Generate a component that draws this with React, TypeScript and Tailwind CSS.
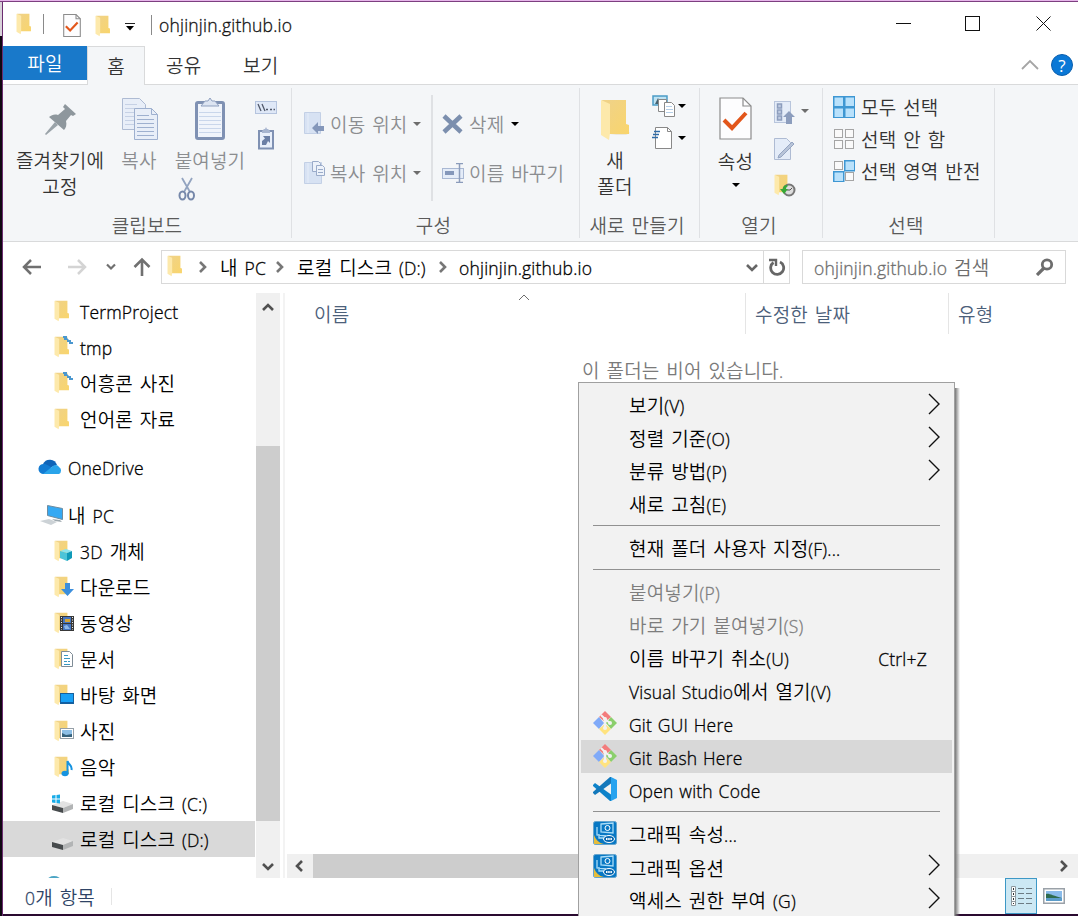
import React from "react";

type Kids = { children?: React.ReactNode };

function Svg({ w, h, className = "", children }: Kids & { w: number; h: number; className?: string }) {
  return (
    <svg width={w} height={h} viewBox={`0 0 ${w} ${h}`} fill="none" className={`shrink-0 ${className}`}>
      {children}
    </svg>
  );
}

/* Mixed Korean / Latin text: each script gets its own face and size. */
function T({ children, className = "" }: { children: string; className?: string }) {
  const runs = children.match(/[\x21-\x7e]+(?: +[\x21-\x7e]+)*|[^\x21-\x7e]+/g) ?? [];
  return (
    <span className={`whitespace-pre ${className}`}>
      {runs.map((r, i) =>
        /[\x21-\x7e]/.test(r) ? (
          <span key={i} className="font-['Open_Sans','Noto_Sans',sans-serif] text-[17.5px] font-light tracking-[0.2px] [-webkit-text-stroke:0.3px_currentColor] [word-spacing:1px]">{r}</span>
        ) : (
          <span key={i} className="text-[19px] font-[350] tracking-[0.15px] [word-spacing:2.5px]">{r}</span>
        )
      )}
    </span>
  );
}

function Caret({ color = "#000", className = "" }: { color?: string; className?: string }) {
  return (
    <Svg w={8} h={4} className={className}>
      <path d="M0 0h8L4 4z" fill={color} />
    </Svg>
  );
}

function Folder({ big = false, className = "" }: { big?: boolean; className?: string }) {
  return (
    <svg width={big ? 31 : 16} height={big ? 42 : 22} viewBox="0 0 31 42" className={`shrink-0 ${className}`}>
      <defs>
        <linearGradient id="fold" x1="0" y1="0" x2="1" y2="1">
          <stop offset="0" stopColor="#efd28a" />
          <stop offset="1" stopColor="#f9d56c" />
        </linearGradient>
      </defs>
      {big && <path d="M10 36h16l4-2-1-1z" fill="#ebe7dc" />}
      <path d="M2 1h24v24l3 1v9H9z" fill="url(#fold)" />
      <path d="M1 1l9 4v29l-1 7-8-5z" fill="#fde9ab" />
    </svg>
  );
}

function Doc({ check = false, big = false }: { check?: boolean; big?: boolean }) {
  return (
    <svg width={big ? 33 : 18} height={big ? 43 : 23} viewBox="0 0 33 43" fill="none" className="shrink-0">
      <path d="M1 1h23l8 8v33H1z" fill="#fdfdfe" stroke="#8c8c8c" strokeWidth={big ? 1.2 : 2} />
      <path d="M24 1v8h8" stroke="#8c8c8c" strokeWidth={big ? 1.2 : 2} />
      {check && <path d="M5 23l8 8 14-15" stroke="#e2561b" strokeWidth="4" />}
    </svg>
  );
}

function Group({ label, className, labelClass = "", children }: Kids & { label: string; className: string; labelClass?: string }) {
  return (
    <div className={`flex shrink-0 flex-col ${className}`}>
      <div className="flex h-[127px]">{children}</div>
      <div className={`flex h-[26px] items-center justify-center text-[#5a5a5a] ${labelClass}`}>
        <T>{label}</T>
      </div>
    </div>
  );
}

const Sep = () => <div className="my-[3px] w-px shrink-0 bg-[#dfe1e4]" />;

function Ribbon() {
  return (
    <div className="flex h-[157px] border-b border-[#d9dadb] bg-[#f4f6f8] text-[#333]">
      <Group label="클립보드" className="w-[288px]">
        <div className="ml-[12px] flex w-[90px] flex-col items-center text-center leading-[26px]">
          <div className="flex h-[62px] items-center pt-[6px]">
            <Svg w={31} h={31}>
              <path d="M20 0l11 10-3 2-2-1-5 6c1 4 0 7-2 9L4 13c3-2 5-3 9-2l7-6-2-2z" fill="#8e979d" />
              <path d="M10 18l3 3L1 31l-1-1z" fill="#9aa3a9" />
            </Svg>
          </div>
          <T>즐겨찾기에</T>
          <T>고정</T>
        </div>
        <div className="flex w-[68px] flex-col items-center leading-[26px] text-[#8b8d90]">
          <div className="flex h-[62px] items-center pt-[5px]">
            <Svg w={37} h={43}>
              <path d="M1.500 1.500h17l6 6v25h-23z" fill="#e8eef8" stroke="#aebbd3" />
              <path d="M4 7.500h12M4 11.500h16M4 15.500h9M4 19.500h9M4 23.500h9M4 27.500h9" stroke="#c6d1e5" />
              <path d="M13.500 11.500h17l6 6v25h-23z" fill="#e8eef8" stroke="#9eb0cf" />
              <path d="M30.500 11.500v6h6M16 18.500h12M16 22.500h17M16 26.500h17M16 30.500h17M16 34.500h17M16 38.500h17" stroke="#9eb0cf" />
            </Svg>
          </div>
          <T>복사</T>
        </div>
        <div className="flex w-[74px] flex-col items-center leading-[26px] text-[#8b8d90]">
          <div className="flex h-[62px] items-center pt-[5px]">
            <Svg w={32} h={44}>
              <rect x="2.5" y="5.500" width="27" height="36" rx="1.500" fill="#f0f4fb" stroke="#7f91b3" strokeWidth="3" />
              <path d="M5 15.500h22M5 19.500h22M5 23.500h22M5 27.500h22M5 31.500h22M5 35.500h22" stroke="#c9d6eb" />
              <path d="M7 9l4-5h3l2-3 2 3h3l4 5z" fill="#dce4f2" stroke="#8fa0c0" />
            </Svg>
          </div>
          <T>붙여넣기</T>
          <Svg w={18} h={24} className="mt-[4px] mr-[47px]">
            <path d="M4 1l8 14M14 1L6 15" stroke="#93a4c0" strokeWidth="1.800" />
            <ellipse cx="4.500" cy="18.500" rx="3" ry="4" stroke="#7688aa" strokeWidth="2" />
            <ellipse cx="13" cy="18.500" rx="3" ry="4" stroke="#7688aa" strokeWidth="2" />
          </Svg>
        </div>
        <div className="flex w-[38px] flex-col items-center pt-[16px]">
          <Svg w={22} h={13}>
            <rect x=".5" y=".5" width="21" height="12" fill="#dfe8f7" stroke="#b5c4de" />
            <path d="M3 3l3 7M7 3l3 7" stroke="#51596b" strokeWidth="1.300" />
            <path d="M11 8.500h2M15 8.500h2M18.500 8.500h1.500" stroke="#51596b" strokeWidth="1.500" />
          </Svg>
          <Svg w={18} h={23} className="mt-[13px]">
            <rect x="2" y="4" width="14" height="17.500" fill="#e8effa" stroke="#7f91b3" strokeWidth="2" />
            <path d="M5 4l2-2h1l1-2 1 2h1l2 2v2H5z" fill="#a7b5cf" />
            <path d="M5 18v-4l3-2.500L6 9h7v7l-2-2-2 4z" fill="#6b7fa5" />
          </Svg>
        </div>
      </Group>
      <Sep />
      <Group label="구성" className="w-[287px]" labelClass="pr-[4px]">
        <div className="flex w-[139px] flex-col pt-[14px] pl-[12px] text-[#8b8d90]">
          <div className="flex h-[49px] items-center">
            <Svg w={22} h={23}>
              <path d="M.5.500h16v21H.5z" fill="#d7e2f3" stroke="#c3d0e6" />
              <path d="M4 1v20" stroke="#e6edf8" />
              <path d="M8 16l6-6v4h6v5h-6v3z" fill="#8497ba" />
            </Svg>
            <T className="ml-[4px]">이동 위치</T>
            <Caret color="#6d6d6d" className="ml-[6px]" />
          </div>
          <div className="flex h-[49px] items-center">
            <Svg w={22} h={23}>
              <path d="M.5 1.500h17v21H.5z" fill="#d7e2f3" stroke="#c3d0e6" />
              <path d="M4 2v20" stroke="#e6edf8" />
              <path d="M8.500.5h6l2 2v8h-8z" fill="#edf2fa" stroke="#9aabc9" />
              <path d="M12.500 4.500h6l2 2v8h-8zM14 8.500h5M14 11.500h5" fill="#edf2fa" stroke="#9aabc9" />
            </Svg>
            <T className="ml-[4px]">복사 위치</T>
            <Caret color="#6d6d6d" className="ml-[6px]" />
          </div>
        </div>
        <div className="mt-[10px] h-[106px] w-[2px] bg-[#dfe1e4]" />
        <div className="flex flex-col pt-[14px] pl-[9px] text-[#8b8d90]">
          <div className="flex h-[49px] items-center">
            <Svg w={22} h={20}>
              <path d="M2 2l17 16M19 2L2 18" stroke="#7c8fae" strokeWidth="4.500" />
            </Svg>
            <T className="ml-[5px]">삭제</T>
            <Caret className="ml-[7px]" />
          </div>
          <div className="flex h-[49px] items-center">
            <Svg w={22} h={20}>
              <rect x=".5" y="5.500" width="21" height="10" fill="#e4ecf8" stroke="#a9b8d3" />
              <path d="M3 8h9v4H3z" fill="#8497ba" />
              <path d="M14 .5h7M17.500 0v19M14 19.500h7" stroke="#8b9cbb" strokeWidth="1.500" />
            </Svg>
            <T className="ml-[5px]">이름 바꾸기</T>
          </div>
        </div>
      </Group>
      <Sep />
      <Group label="새로 만들기" className="w-[119px]" labelClass="pr-[5px]">
        <div className="flex w-[70px] flex-col items-center leading-[26px]">
          <div className="flex h-[62px] items-center pt-[7px]"><Folder big /></div>
          <T>새</T>
          <T>폴더</T>
        </div>
        <div className="flex flex-col pt-[9px]">
          <div className="flex items-center">
            <Svg w={24} h={24} className="ml-[2px]">
              <rect x="1" y="2" width="14" height="9" fill="#bfe3f3" stroke="#4b9cc6" strokeWidth="1.500" />
              <path d="M3 10l3-6 3 6z" fill="#46616f" />
              <path d="M6.500 5.500h8v12h-8z" fill="#fff" stroke="#888" />
              <path d="M12.500 8.500h7l3 3v11h-10z" fill="#fff" stroke="#888" />
              <path d="M14 12.500h6M14 15.500h7M14 18.500h7" stroke="#b5cfe8" />
            </Svg>
            <Caret className="ml-[2px]" />
          </div>
          <div className="mt-[8px] flex items-center">
            <Svg w={24} h={24} className="ml-[2px]">
              <path d="M3.500 1.500h12l4 4v17h-16z" fill="#fff" stroke="#888" />
              <path d="M15.500 1.500v4h4" stroke="#888" />
              <path d="M2 5.500h6M1 8.500h6M0 11.500h6" stroke="#2f6ba8" strokeWidth="1.500" />
            </Svg>
            <Caret className="ml-[2px]" />
          </div>
        </div>
      </Group>
      <Sep />
      <Group label="열기" className="w-[122px]" labelClass="pr-[4px]">
        <div className="flex w-[71px] flex-col items-center leading-[26px]">
          <div className="flex h-[63px] items-center pt-[4px]"><Doc check big /></div>
          <T>속성</T>
          <Caret className="mt-[9px]" />
        </div>
        <div className="flex flex-col gap-[13px] pt-[16px] pl-[3px]">
          <div className="flex items-center">
            <Svg w={22} h={24}>
              <rect x=".5" y=".5" width="16" height="21" fill="#e4ecf8" stroke="#b8c5dc" />
              <path d="M3.500 3h4v4h-4zM3.500 9h4v4h-4zM3.500 15h4v4h-4z" fill="#c0cce2" stroke="#8c9dbd" strokeWidth="1.500" />
              <path d="M15 10l6 6h-3v7h-6v-7H9z" fill="#8c9dbd" />
            </Svg>
            <Caret color="#6d6d6d" className="mb-[4px] ml-[5px]" />
          </div>
          <Svg w={22} h={24}>
            <path d="M.5.5h12l4 4v17H.5z" fill="#e4ecf8" stroke="#aebbd3" />
            <path d="M18 4l2 2L7 19l-3 1 1-3z" fill="#b8c4d8" stroke="#95a5c2" />
          </Svg>
          <div className="relative -mt-[1px]">
            <Folder />
            <Svg w={16} h={14} className="absolute top-[9px] left-[6px]">
              <circle cx="9" cy="7" r="5.500" fill="#ddd" stroke="#777" strokeWidth="2" />
              <path d="M7 7h3l2-2" stroke="#555" />
              <path d="M7 2C3 2 3 5 3 6H0l4 5 4-5H6c0-2 1-2 2-3z" fill="#37a836" />
            </Svg>
          </div>
        </div>
      </Group>
      <Sep />
      <Group label="선택" className="w-[171px]" labelClass="pr-[5px]">
        <div className="flex flex-col pt-[6px] pl-[10px]">
          {[
            ["모두 선택", [1, 1, 1, 1]] as const,
            ["선택 안 함", [0, 0, 0, 0]] as const,
            ["선택 영역 반전", [0, 1, 1, 0]] as const,
          ].map(([label, on]) => (
            <div key={label} className="flex h-[32px] items-center gap-[6px]">
              <Svg w={22} h={22}>
                {on.map((v, i) => (
                  <rect
                    key={i}
                    x={(i % 2) * 11 + (v ? 0.75 : 1.5)}
                    y={Math.floor(i / 2) * 11 + (v ? 0.75 : 1.5)}
                    width={v ? 10 : 8}
                    height={v ? 10 : 8}
                    fill={v ? "#b9e1fb" : "#fafafa"}
                    stroke={v ? "#3e97d3" : "#a5a5a5"}
                    strokeWidth={v ? 1.5 : 1}
                  />
                ))}
              </Svg>
              <T>{label}</T>
            </div>
          ))}
        </div>
      </Group>
      <Sep />
    </div>
  );
}

function Chev({ dir = "right", color = "#666", big = false }: { dir?: "right" | "left" | "up" | "down"; color?: string; big?: boolean }) {
  const d = { right: "M4 2l5 5-5 5", left: "M10 2L5 7l5 5", up: "M2 9l5-5 5 5", down: "M2 5l5 5 5-5" }[dir];
  return (
    <Svg w={14} h={14}>
      <path d={d} stroke={color} strokeWidth={big ? 2.6 : 2} />
    </Svg>
  );
}

function AddressRow() {
  return (
    <div className="flex h-[51px] items-start pt-[8px] pl-[17px]">
      <div className="flex h-[34px] items-center">
        <Svg w={22} h={18}>
          <path d="M21 9H4M11 2L4 9l7 7" stroke="#707070" strokeWidth="2.500" />
        </Svg>
        <Svg w={22} h={18} className="ml-[25px]">
          <path d="M1 9h17M11 2l7 7-7 7" stroke="#d4d4d4" strokeWidth="2.500" />
        </Svg>
        <Svg w={10} h={8} className="ml-[17px]">
          <path d="M1 1.500l4 4 4-4" stroke="#707070" strokeWidth="2.200" />
        </Svg>
        <Svg w={18} h={20} className="ml-[17px]">
          <path d="M9 19V3M1.500 10L9 2.500l7.500 7.500" stroke="#707070" strokeWidth="2.600" />
        </Svg>
      </div>
      <div className="ml-[10px] flex h-[34px] w-[629px] border border-[#d9d9d9] text-black">
        <div className="flex flex-1 items-center pl-[5px]">
          <Folder className="-mt-[3px]" />
          <div className="ml-[13px]"><Chev big color="#777" /></div>
          <T className="ml-[10px] w-[53px]">내 PC</T>
          <Chev big color="#777" />
          <T className="ml-[10px] w-[139px]">로컬 디스크 (D:)</T>
          <Chev big color="#777" />
          <T className="ml-[9px]">ohjinjin.github.io</T>
          <div className="mr-[4px] ml-auto"><Chev dir="down" big color="#666" /></div>
        </div>
        <div className="flex w-[26px] items-center justify-center border-l border-[#d9d9d9]">
          <Svg w={18} h={18}>
            <path d="M5.500 4.500A6.500 6.500 0 1 0 12 4" stroke="#666" strokeWidth="2.800" />
            <path d="M1 2h7v6" stroke="#666" strokeWidth="2.400" />
          </Svg>
        </div>
      </div>
      <div className="ml-[12px] flex h-[34px] w-[264px] items-center border border-[#d9d9d9] pl-[11px] text-[#6d6d6d]">
        <T>ohjinjin.github.io 검색</T>
        <Svg w={18} h={18} className="mr-[11px] ml-auto">
          <circle cx="11" cy="6.500" r="4.700" stroke="#6d6d6d" strokeWidth="2.800" />
          <path d="M8 10l-7 7" stroke="#6d6d6d" strokeWidth="3.200" />
        </Svg>
      </div>
    </div>
  );
}

function Badge({ kind }: { kind: string }) {
  switch (kind) {
    case "link":
      return <Svg w={10} h={10} className="absolute -top-[1px] left-[9px]"><path d="M0 1h4v2l2 2h2v2h2v2H6V7H4V5H1V3H0z" fill="#4a97cf" /></Svg>;
    case "3d":
      return <Svg w={13} h={13} className="absolute top-[8px] left-[6px]"><path d="M0 3l6-2 6 2-5 2z" fill="#8be4ee" /><path d="M0 3l7 2v8l-7-3z" fill="#4cc4d8" /><path d="M12 3L7 5v8l5-3z" fill="#0f9ab8" /></Svg>;
    case "down":
      return <Svg w={13} h={13} className="absolute top-[7px] left-[7px]"><path d="M4 0h5v6h4l-6.500 7L0 6h4z" fill="#3c8fdd" /></Svg>;
    case "video":
      return <Svg w={15} h={15} className="absolute top-[4px] left-[6px]"><path d="M0 0h14v15H0z" fill="#383838" /><path d="M3 1h8v6H3zM3 8h8v6H3z" fill="#4676c2" /><path d="M5 3h5v3H5z" fill="#d3a437" /><path d="M4 10l3-1 3 4H5z" fill="#8fb9e8" /><path d="M1.500 1v13M12.500 1v13" stroke="#eee" strokeDasharray="1 1.500" /></Svg>;
    case "doc":
      return <Svg w={13} h={16} className="absolute top-[3px] left-[7px]"><path d="M.5.5h8l3 3v12H.5z" fill="#fff" stroke="#7f8c96" /><path d="M3 4.500h4M3 7.500h6M3 10.500h3M7 10.500h2M3 13.500h6" stroke="#3898c2" strokeWidth="1.200" /></Svg>;
    case "desktop":
      return <Svg w={14} h={11} className="absolute top-[9px] left-[6px]"><rect x=".5" y=".5" width="13" height="10" fill="#18a0f5" stroke="#17609c" /><path d="M1 9.500h12" stroke="#0f5fa8" /></Svg>;
    case "photo":
      return <Svg w={14} h={12} className="absolute top-[8px] left-[6px]"><rect x=".5" y=".5" width="13" height="10" fill="#fff" stroke="#96a0a8" /><path d="M2 2h10v7H2z" fill="#8dbfe6" /><path d="M2 5l4 2 6-1v3H2z" fill="#36627d" /></Svg>;
    case "music":
      return <Svg w={12} h={17} className="absolute top-[4px] left-[7px]"><ellipse cx="4" cy="13.500" rx="3.500" ry="2.800" fill="#1593e0" /><path d="M6.500 14V1c1 4 5 4 4 9" stroke="#1593e0" strokeWidth="2" /></Svg>;
    default:
      return null;
  }
}

function Drive({ win = false }: { win?: boolean }) {
  return (
    <Svg w={23} h={20}>
      <path d="M1 12l11-4 10 3-10 4z" fill="#e2e2e2" />
      <path d="M1 12l11 3v5L1 17z" fill="#474b4d" />
      <path d="M12 15l10-4v5l-10 4z" fill="#b2b4b5" />
      {win && <path d="M1 2.600l3.500-.5V5.500H1zM5.500 2l3.500-.6v4.100H5.500zM1 6.500h3.500V10L1 9.500zM5.500 6.500H9v4.100l-3.500-.6z" fill="#18ace8" />}
    </Svg>
  );
}

const items: [string, string][] = [
  ["3D 개체", "3d"], ["다운로드", "down"], ["동영상", "video"], ["문서", "doc"],
  ["바탕 화면", "desktop"], ["사진", "photo"], ["음악", "music"],
];

function FolderRow({ label, kind }: { label: string; kind: string }) {
  return (
    <div className="flex h-[36px] shrink-0 items-center pl-[51px]">
      <div className="relative w-[26px]"><Folder /><Badge kind={kind} /></div>
      <T>{label}</T>
    </div>
  );
}

function Sidebar() {
  return (
    <div className="flex w-[252px] flex-col overflow-hidden text-black">
      <FolderRow label="TermProject" kind="" />
      <FolderRow label="tmp" kind="link" />
      <FolderRow label="어흥콘 사진" kind="link" />
      <FolderRow label="언어론 자료" kind="" />
      <div className="mt-[12px] flex h-[36px] shrink-0 items-center pl-[35px]">
        <Svg w={25} h={17} className="-mt-[2px] mr-[5px]">
          <path d="M5 6a7.500 7.500 0 0 1 14 1l-8 3z" fill="#0f64b8" />
          <path d="M5 16a5 5 0 0 1 1-10c3 0 5 2 14 8v2z" fill="#127bd2" />
          <path d="M5 16L15 8c2-2 5-1 6 1a4 4 0 0 1 0 7z" fill="#2aa4ea" />
        </Svg>
        <T>OneDrive</T>
      </div>
      <div className="mt-[12px] flex h-[36px] shrink-0 items-center pl-[37px]">
        <Svg w={24} h={22} className="mr-[4px]">
          <path d="M7.500 1.500l15 3v11l-15-4z" fill="#35a9f3" stroke="#6e8ca0" />
          <path d="M0 17l9-2 8 3-6 3z" fill="#ccd2d6" />
          <path d="M12 15l8 1 2 2-7-1z" fill="#9da8ae" />
        </Svg>
        <T>내 PC</T>
      </div>
      {items.map(([l, k]) => <FolderRow key={l} label={l} kind={k} />)}
      <div className="flex h-[36px] shrink-0 items-center pl-[48px]"><Drive win /><T className="ml-[6px]">로컬 디스크 (C:)</T></div>
      <div className="flex h-[36px] shrink-0 items-center bg-[#d9d9d9] pt-px pl-[48px]"><Drive /><T className="ml-[6px]">로컬 디스크 (D:)</T></div>
      <Svg w={16} h={4} className="mt-[18px] ml-[43px]"><ellipse cx="8" cy="6" rx="7" ry="5" fill="#4ca5c4" /></Svg>
    </div>
  );
}

function GitIcon() {
  return (
    <Svg w={24} h={24}>
      <path d="M12 0l6 6-6 5-6-5z" fill="#f37c7c" />
      <path d="M6 6l5 6-5 6-6-6z" fill="#80aaf8" />
      <path d="M18 6l6 6-6 6-5-6z" fill="#8bcf6c" />
      <path d="M12 13l6 5-6 6-6-6z" fill="#ffe37f" />
      <path d="M8 4l4 4v9M12 8l5 4" stroke="#f2f2f2" strokeWidth="2" />
      <circle cx="12" cy="8" r="2" fill="#f2f2f2" /><circle cx="17" cy="12" r="2" fill="#f2f2f2" /><circle cx="12" cy="17" r="2" fill="#f2f2f2" />
    </Svg>
  );
}

function CodeIcon() {
  return (
    <Svg w={24} h={24}>
      <path d="M0 8l2-2L18 17.500V24h-1L0 9z" fill="#0e83ca" />
      <path d="M0 16l2 2L18 6.500V0h-1L0 15z" fill="#1378bb" />
      <path d="M18 0l6 3v18l-6 3z" fill="#27a3ef" />
    </Svg>
  );
}

function IntelIcon() {
  return (
    <Svg w={24} h={24}>
      <rect x=".5" y=".5" width="23" height="23" rx="2" fill="#0878c4" stroke="#66a4cc" />
      <path d="M1 14c2 5 5 8 10 9H1z" fill="#e6bd3c" />
      <path d="M8 3l12-1v10l-12-1zM4 6v8l9 1M6 13v4h5" stroke="#a9dcf8" strokeWidth="1.300" />
      <circle cx="14.500" cy="7" r="2.500" stroke="#fff" />
      <ellipse cx="16" cy="18" rx="5.500" ry="3.500" fill="#0868b0" stroke="#fff" />
      <path d="M13 18h6" stroke="#fff" strokeWidth="2" strokeDasharray="1.500 .7" />
    </Svg>
  );
}

type MI = { t: string; sub?: boolean; dim?: boolean; hint?: string; icon?: React.ReactNode; on?: boolean; low?: boolean };

function Item({ t, sub, dim, hint, icon, on, low }: MI) {
  const shift = low ? "pt-[2px]" : "";
  return (
    <div className={`mx-[2px] flex h-[33px] shrink-0 items-center pl-[12px] ${on ? "bg-[#d8d8d8]" : ""} ${dim ? "text-[#7d7d7d]" : "text-black"}`}>
      <div className="-mt-[2px] w-[36px]">{icon}</div>
      <T className={shift}>{t}</T>
      {hint && <T className={`mr-[25px] ml-auto ${shift}`}>{hint}</T>}
      {sub && (
        <Svg w={14} h={22} className="-mt-[4px] mr-[11px] ml-auto">
          <path d="M2 1l10 10L2 21" stroke="#111" strokeWidth="1.400" />
        </Svg>
      )}
    </div>
  );
}

function Menu() {
  return (
    <div className="absolute top-[382px] left-[578px] flex h-[534px] w-[377px] flex-col overflow-hidden border border-b-0 border-[#a0a0a0] bg-[#f2f2f2] pt-[6px]">
      <Item t="보기(V)" sub />
      <Item t="정렬 기준(O)" sub />
      <Item t="분류 방법(P)" sub />
      <Item t="새로 고침(E)" />
      <div className="mx-[14px] mt-[4px] mb-[6px] h-px shrink-0 bg-[#919191]" />
      <Item t="현재 폴더 사용자 지정(F)..." />
      <div className="mx-[14px] mt-[4px] mb-[5px] h-px shrink-0 bg-[#919191]" />
      <Item t="붙여넣기(P)" dim low />
      <Item t="바로 가기 붙여넣기(S)" dim low />
      <Item t="이름 바꾸기 취소(U)" hint="Ctrl+Z" low />
      <Item t="Visual Studio에서 열기(V)" low />
      <Item t="Git GUI Here" icon={<GitIcon />} low />
      <Item t="Git Bash Here" icon={<GitIcon />} on low />
      <Item t="Open with Code" icon={<CodeIcon />} low />
      <div className="mx-[14px] mt-[5px] mb-[5px] h-px shrink-0 bg-[#919191]" />
      <Item t="그래픽 속성..." icon={<IntelIcon />} low />
      <Item t="그래픽 옵션" icon={<IntelIcon />} sub low />
      <Item t="액세스 권한 부여 (G)" sub low />
    </div>
  );
}

export default function App() {
  return (
    <div className="relative h-[918px] w-[1082px] overflow-hidden bg-white font-['Noto_Sans_CJK_KR',sans-serif] text-[19px] leading-[26px]">
      <div className="flex h-[916px] w-[1078px] flex-col">
        <div className="h-[2px] shrink-0 border-b border-[#7d3f80] bg-[#e6b6ea]" />
        <div className="flex min-h-0 flex-1">
          <div className="w-[3px] shrink-0 border-r border-[#6b2c70] bg-[#100812]">
            <div className="h-[34px] bg-[#d9d3da]" />
          </div>
          <div className="flex w-[1075px] flex-col">
            <div className="flex h-[44px] shrink-0 items-center pl-[13px]">
              <Folder />
              <div className="ml-[11px] h-[20px] w-px bg-[#8a8a8a]" />
              <div className="ml-[19px] flex pt-[2px]"><Doc check /></div>
              <Folder className="mt-[3px] ml-[14px]" />
              <Svg w={10} h={8} className="mt-[5px] ml-[14px]"><path d="M0 .5h10" stroke="#222" /><path d="M1 3h8L5 7.500z" fill="#000" /></Svg>
              <div className="mt-[2px] ml-[16px] h-[20px] w-px bg-[#8a8a8a]" />
              <T className="ml-[7px] text-[#111]">ohjinjin.github.io</T>
              <Svg w={156} h={16} className="mr-[27px] ml-auto">
                <path d="M1 7.500h15M141.500 .5l14 14M155.500 .5l-14 14" stroke="#111" />
                <rect x="70.500" y=".5" width="14" height="14" stroke="#111" />
              </Svg>
            </div>
            <div className="flex h-[39px] shrink-0">
              <div className="flex w-[84px] flex-col border-b border-[#d9dadb]">
                <div className="flex h-[34px] items-center justify-center bg-[#1979ca] text-white"><T>파일</T></div>
              </div>
              <div className="flex w-[58px] items-center justify-center border border-b-0 border-[#d9dadb] bg-[#f4f6f8] text-[#333]"><T>홈</T></div>
              <div className="flex flex-1 items-center border-b border-[#d9dadb] pl-[21px] text-[#333]">
                <T className="w-[77px]">공유</T>
                <T>보기</T>
                <Svg w={18} h={12} className="ml-auto"><path d="M1 10l8-8 8 8" stroke="#a5a5a5" strokeWidth="1.800" /></Svg>
                <div className="mr-[5px] ml-[12px] flex h-[22px] w-[22px] items-center justify-center rounded-full border border-[#0a5fae] bg-[#0a78d6] font-['Open_Sans'] text-[17px] leading-none font-normal text-white">?</div>
              </div>
            </div>
            <Ribbon />
            <AddressRow />
            <div className="flex h-[585px] shrink-0">
              <Sidebar />
              <div className="ml-px flex w-[24px] flex-col items-center bg-[#f0f0f0] pt-[8px] pb-[5px]">
                <Chev dir="up" big color="#505050" />
                <div className="mt-[131px] h-[375px] w-full bg-[#cdcdcd]" />
                <div className="mt-auto"><Chev dir="down" big color="#505050" /></div>
              </div>
              <div className="ml-[3px] w-[2px] bg-[#f3f3f3]" />
              <div className="ml-[2px] flex flex-1 flex-col">
                <div className="flex h-[41px] text-[#4c607a]">
                  <div className="relative flex w-[459px] items-center border-r border-[#e5e5e5] pl-[27px]">
                    <T>이름</T>
                    <Svg w={12} h={7} className="absolute top-[1px] left-[231px]"><path d="M1 6l5-5 5 5" stroke="#6d6d6d" /></Svg>
                  </div>
                  <div className="flex w-[203px] items-center border-r border-[#e5e5e5] pl-[9px]"><T>수정한 날짜</T></div>
                  <div className="flex items-center pl-[9px]"><T>유형</T></div>
                </div>
                <div className="mt-[23px] pl-[295px] text-[#7a7a7a]"><T>이 폴더는 비어 있습니다.</T></div>
                <div className="mt-auto flex h-[24px] items-center bg-[#f0f0f0] pr-[7px] pl-[5px]">
                  <Chev dir="left" big color="#505050" />
                  <div className="ml-[7px] h-[24px] w-[600px] bg-[#cdcdcd]" />
                  <div className="ml-auto"><Chev big color="#505050" /></div>
                </div>
              </div>
            </div>
            <div className="flex flex-1 items-center border-b-2 border-[#2a0a30] pl-[22px] text-[#2f4466]">
              <T className="pt-[2px]">0개 항목</T>
              <div className="ml-[16px] h-[17px] w-px bg-[#e5e5e5]" />
              <div className="mr-[6px] ml-auto flex h-full w-[32px] items-center justify-center border border-[#3d98c6] bg-[#cce8f4]">
                <Svg w={22} h={22}>
                  <path d="M1.500 1.500v19h4v-19zM1 6.500h5M1 11.500h5M1 16.500h5" fill="#fff" stroke="#8d989e" />
                  <path d="M8 3.500h6M16 3.500h6M8 8.500h6M16 8.500h6M8 13.500h6M16 13.500h6M8 18.500h6M16 18.500h6" stroke="#6c7b83" />
                  <path d="M3 3h1v2H3zM3 8h1v2H3zM3 13h1v2H3zM3 18h1v1H3z" fill="#333" />
                </Svg>
              </div>
              <Svg w={22} h={16} className="mr-[13px]">
                <rect x=".75" y=".75" width="20.500" height="14.500" fill="#fff" stroke="#9aa1a8" strokeWidth="1.500" />
                <path d="M3 3h16v10H3z" fill="#8abbea" />
                <path d="M3 6c3-1 7 2 16 4H3z" fill="#2f6b4d" />
                <path d="M3 10h16v3H3z" fill="#5b9cc9" />
              </Svg>
            </div>
          </div>
        </div>
      </div>
      <div className="absolute top-[388px] left-[955px] h-[528px] w-[5px] bg-linear-to-r from-[#777] to-transparent" />
      <Menu />
    </div>
  );
}
